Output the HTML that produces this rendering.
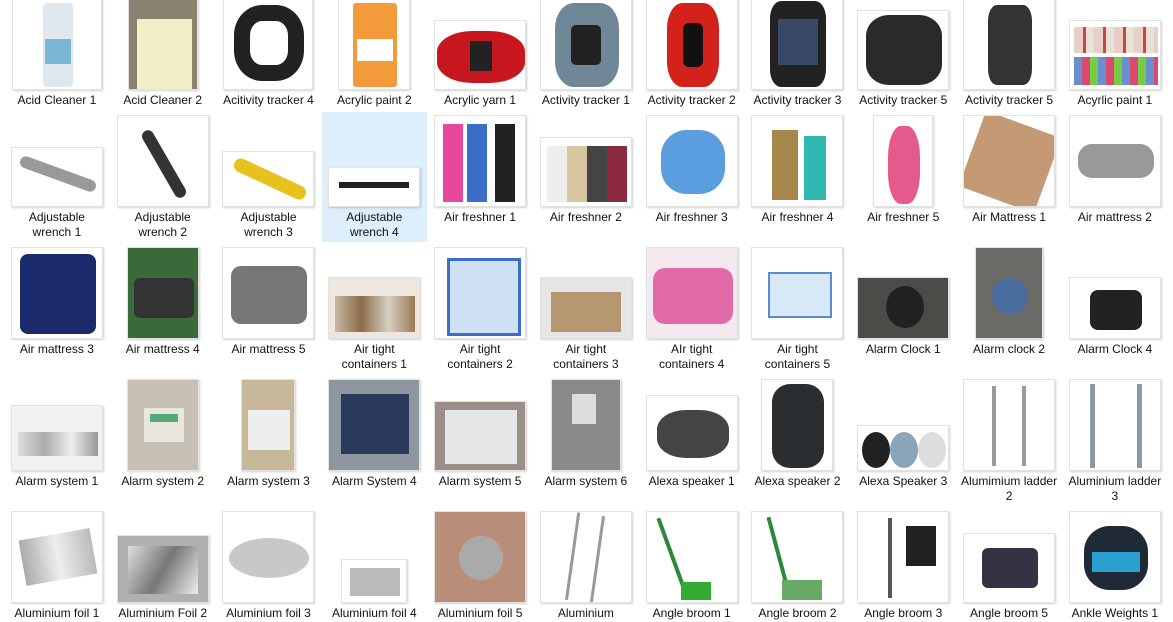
<!DOCTYPE html>
<html><head><meta charset="utf-8"><style>
body{margin:0;width:1173px;height:622px;background:#fff;overflow:hidden;position:relative;font-family:"Segoe UI","Liberation Sans",sans-serif;}
.r{position:absolute;left:4px;display:grid;grid-template-columns:repeat(11,105.8px);}
.th{height:92px;display:flex;align-items:flex-end;justify-content:center;}
.t{box-sizing:border-box;border:1px solid #e2e2e2;box-shadow:1px 1px 2px rgba(0,0,0,.18);background:#fff;position:relative;overflow:hidden;}
.t i{position:absolute;display:block;}
.l{font-size:12px;line-height:15px;color:#111;text-align:center;margin-top:3px;padding:0 4px;}
.sel{position:absolute;left:322px;top:112px;width:105px;height:130px;background:#dfeefb;}
</style></head><body>
<div class="sel"></div>
<div class="r" style="top:-2px">
<div><div class="th"><div class="t" style="width:90px;height:92px"><i style="left:30px;top:4px;width:30px;height:84px;background:#dfe8ee;border-radius:4px"></i><i style="left:32px;top:40px;width:26px;height:25px;background:#7ab6d6"></i></div></div><div class="l">Acid Cleaner 1</div></div>
<div><div class="th"><div class="t" style="width:70px;height:92px;background:#8a8270"><i style="left:8px;top:20px;width:55px;height:70px;background:#f2efc8"></i></div></div><div class="l">Acid Cleaner 2</div></div>
<div><div class="th"><div class="t" style="width:90px;height:92px"><i style="left:10px;top:6px;width:70px;height:76px;border:16px solid #222;border-radius:40%;box-sizing:border-box"></i></div></div><div class="l">Acitivity tracker 4</div></div>
<div><div class="th"><div class="t" style="width:72px;height:92px"><i style="left:14px;top:4px;width:44px;height:84px;background:#f39a3a;border-radius:3px"></i><i style="left:18px;top:40px;width:36px;height:22px;background:#fff"></i></div></div><div class="l">Acrylic paint 2</div></div>
<div><div class="th"><div class="t" style="width:92px;height:70px"><i style="left:2px;top:10px;width:88px;height:52px;background:#c8181f;border-radius:40%"></i><i style="left:35px;top:20px;width:22px;height:30px;background:#222"></i></div></div><div class="l">Acrylic yarn 1</div></div>
<div><div class="th"><div class="t" style="width:92px;height:92px"><i style="left:14px;top:4px;width:64px;height:84px;background:#6f8796;border-radius:30%"></i><i style="left:30px;top:26px;width:30px;height:40px;background:#222;border-radius:5px"></i></div></div><div class="l">Activity tracker 1</div></div>
<div><div class="th"><div class="t" style="width:92px;height:92px"><i style="left:20px;top:4px;width:52px;height:84px;background:#d3211c;border-radius:30%"></i><i style="left:36px;top:24px;width:20px;height:44px;background:#111;border-radius:6px"></i></div></div><div class="l">Activity tracker 2</div></div>
<div><div class="th"><div class="t" style="width:92px;height:92px"><i style="left:18px;top:2px;width:56px;height:86px;background:#222;border-radius:20%"></i><i style="left:26px;top:20px;width:40px;height:46px;background:#3a4a66"></i></div></div><div class="l">Activity tracker 3</div></div>
<div><div class="th"><div class="t" style="width:92px;height:80px"><i style="left:8px;top:4px;width:76px;height:70px;background:#2a2a2a;border-radius:30%"></i></div></div><div class="l">Activity tracker 5</div></div>
<div><div class="th"><div class="t" style="width:92px;height:92px"><i style="left:24px;top:6px;width:44px;height:80px;background:#333;border-radius:20%"></i></div></div><div class="l">Activity tracker 5</div></div>
<div><div class="th"><div class="t" style="width:92px;height:70px"><i style="left:4px;top:6px;width:84px;height:26px;background:repeating-linear-gradient(90deg,#e8d0c8 0 9px,#c44 9px 12px,#e9e1d8 12px 20px)"></i><i style="left:4px;top:36px;width:84px;height:28px;background:repeating-linear-gradient(90deg,#6a8fd0 0 8px,#d84a6e 8px 16px,#7c4 16px 24px)"></i></div></div><div class="l">Acyrlic paint 1</div></div>
</div>
<div class="r" style="top:115px">
<div><div class="th"><div class="t" style="width:92px;height:60px"><i style="left:6px;top:20px;width:80px;height:12px;background:#999;border-radius:6px;transform:rotate(20deg)"></i></div></div><div class="l">Adjustable wrench 1</div></div>
<div><div class="th"><div class="t" style="width:92px;height:92px"><i style="left:40px;top:10px;width:12px;height:76px;background:#333;border-radius:6px;transform:rotate(-30deg)"></i></div></div><div class="l">Adjustable wrench 2</div></div>
<div><div class="th"><div class="t" style="width:92px;height:56px"><i style="left:8px;top:20px;width:78px;height:14px;background:#e8c21c;border-radius:7px;transform:rotate(25deg)"></i></div></div><div class="l">Adjustable wrench 3</div></div>
<div><div class="th"><div class="t" style="width:92px;height:40px"><i style="left:10px;top:14px;width:70px;height:6px;background:#222"></i></div></div><div class="l">Adjustable wrench 4</div></div>
<div><div class="th"><div class="t" style="width:92px;height:92px"><i style="left:8px;top:8px;width:20px;height:78px;background:#e8489a"></i><i style="left:32px;top:8px;width:20px;height:78px;background:#3a6ec8"></i><i style="left:60px;top:8px;width:20px;height:78px;background:#222"></i></div></div><div class="l">Air freshner 1</div></div>
<div><div class="th"><div class="t" style="width:92px;height:70px"><i style="left:6px;top:8px;width:80px;height:56px;background:linear-gradient(90deg,#eee 0 25%,#d8c6a0 25% 50%,#444 50% 75%,#8c2b40 75%)"></i></div></div><div class="l">Air freshner 2</div></div>
<div><div class="th"><div class="t" style="width:92px;height:92px"><i style="left:14px;top:14px;width:64px;height:64px;background:#5a9ee0;border-radius:40%"></i></div></div><div class="l">Air freshner 3</div></div>
<div><div class="th"><div class="t" style="width:92px;height:92px"><i style="left:20px;top:14px;width:26px;height:70px;background:#a8874a"></i><i style="left:52px;top:20px;width:22px;height:64px;background:#2fb9b0"></i></div></div><div class="l">Air freshner 4</div></div>
<div><div class="th"><div class="t" style="width:60px;height:92px"><i style="left:14px;top:10px;width:32px;height:78px;background:#e45a8c;border-radius:40%"></i></div></div><div class="l">Air freshner 5</div></div>
<div><div class="th"><div class="t" style="width:92px;height:92px"><i style="left:6px;top:6px;width:80px;height:80px;background:#c49a74;transform:rotate(20deg)"></i></div></div><div class="l">Air Mattress 1</div></div>
<div><div class="th"><div class="t" style="width:92px;height:92px"><i style="left:8px;top:28px;width:76px;height:34px;background:#999;border-radius:14px"></i></div></div><div class="l">Air mattress 2</div></div>
</div>
<div class="r" style="top:247px">
<div><div class="th"><div class="t" style="width:92px;height:92px"><i style="left:8px;top:6px;width:76px;height:80px;background:#1a2a6a;border-radius:8px"></i></div></div><div class="l">Air mattress 3</div></div>
<div><div class="th"><div class="t" style="width:72px;height:92px;background:#3a6a3a"><i style="left:6px;top:30px;width:60px;height:40px;background:#333;border-radius:6px"></i></div></div><div class="l">Air mattress 4</div></div>
<div><div class="th"><div class="t" style="width:92px;height:92px"><i style="left:8px;top:18px;width:76px;height:58px;background:#777;border-radius:10px"></i></div></div><div class="l">Air mattress 5</div></div>
<div><div class="th"><div class="t" style="width:92px;height:62px;background:#ede7df"><i style="left:6px;top:18px;width:80px;height:36px;background:linear-gradient(90deg,#c7b8a0,#8b6c4a,#d6d0c2,#9c7a54)"></i></div></div><div class="l">Air tight containers 1</div></div>
<div><div class="th"><div class="t" style="width:92px;height:92px"><i style="left:12px;top:10px;width:68px;height:72px;background:#cfe0f2;border:3px solid #3a6ec8"></i></div></div><div class="l">Air tight containers 2</div></div>
<div><div class="th"><div class="t" style="width:92px;height:62px;background:#e6e6e6"><i style="left:10px;top:14px;width:70px;height:40px;background:#b59870"></i></div></div><div class="l">Air tight containers 3</div></div>
<div><div class="th"><div class="t" style="width:92px;height:92px;background:#f3e9ef"><i style="left:6px;top:20px;width:80px;height:56px;background:#e26aa8;border-radius:12px"></i></div></div><div class="l">AIr tight containers 4</div></div>
<div><div class="th"><div class="t" style="width:92px;height:92px"><i style="left:16px;top:24px;width:60px;height:42px;background:#d7e8f6;border:2px solid #5a8ad0"></i></div></div><div class="l">Air tight containers 5</div></div>
<div><div class="th"><div class="t" style="width:92px;height:62px;background:#4a4c48"><i style="left:28px;top:8px;width:38px;height:42px;background:#222;border-radius:50%"></i></div></div><div class="l">Alarm Clock 1</div></div>
<div><div class="th"><div class="t" style="width:68px;height:92px;background:#6a6a66"><i style="left:16px;top:30px;width:36px;height:36px;background:#4a6da0;border-radius:50%"></i></div></div><div class="l">Alarm clock 2</div></div>
<div><div class="th"><div class="t" style="width:92px;height:62px"><i style="left:20px;top:12px;width:52px;height:40px;background:#222;border-radius:8px"></i></div></div><div class="l">Alarm Clock 4</div></div>
</div>
<div class="r" style="top:379px">
<div><div class="th"><div class="t" style="width:92px;height:66px;background:#f2f2f2"><i style="left:6px;top:26px;width:80px;height:24px;background:linear-gradient(90deg,#ddd,#aaa,#eee,#999)"></i></div></div><div class="l">Alarm system 1</div></div>
<div><div class="th"><div class="t" style="width:72px;height:92px;background:#c7c0b4"><i style="left:16px;top:28px;width:40px;height:34px;background:#e8e6dd"></i><i style="left:22px;top:34px;width:28px;height:8px;background:#5a7"></i></div></div><div class="l">Alarm system 2</div></div>
<div><div class="th"><div class="t" style="width:54px;height:92px;background:#c8b89a"><i style="left:6px;top:30px;width:42px;height:40px;background:#eee"></i></div></div><div class="l">Alarm system 3</div></div>
<div><div class="th"><div class="t" style="width:92px;height:92px;background:#8e96a0"><i style="left:12px;top:14px;width:68px;height:60px;background:#2a3a5a"></i></div></div><div class="l">Alarm System 4</div></div>
<div><div class="th"><div class="t" style="width:92px;height:70px;background:#9a8e88"><i style="left:10px;top:8px;width:72px;height:54px;background:#e6e6e6"></i></div></div><div class="l">Alarm system 5</div></div>
<div><div class="th"><div class="t" style="width:70px;height:92px;background:#8a8a8c"><i style="left:20px;top:14px;width:24px;height:30px;background:#ddd"></i></div></div><div class="l">Alarm system 6</div></div>
<div><div class="th"><div class="t" style="width:92px;height:76px"><i style="left:10px;top:14px;width:72px;height:48px;background:#444;border-radius:40%"></i></div></div><div class="l">Alexa speaker 1</div></div>
<div><div class="th"><div class="t" style="width:72px;height:92px"><i style="left:10px;top:4px;width:52px;height:84px;background:#2a2e30;border-radius:18px"></i></div></div><div class="l">Alexa speaker 2</div></div>
<div><div class="th"><div class="t" style="width:92px;height:46px"><i style="left:4px;top:6px;width:28px;height:36px;background:#222;border-radius:50%"></i><i style="left:32px;top:6px;width:28px;height:36px;background:#8aa4b8;border-radius:50%"></i><i style="left:60px;top:6px;width:28px;height:36px;background:#ddd;border-radius:50%"></i></div></div><div class="l">Alexa Speaker 3</div></div>
<div><div class="th"><div class="t" style="width:92px;height:92px"><i style="left:28px;top:6px;width:34px;height:80px;border-left:4px solid #999;border-right:4px solid #999;box-sizing:border-box"></i></div></div><div class="l">Alumimium ladder 2</div></div>
<div><div class="th"><div class="t" style="width:92px;height:92px"><i style="left:20px;top:4px;width:52px;height:84px;border-left:5px solid #8a9aa8;border-right:5px solid #8a9aa8;box-sizing:border-box"></i></div></div><div class="l">Aluminium ladder 3</div></div>
</div>
<div class="r" style="top:511px">
<div><div class="th"><div class="t" style="width:92px;height:92px"><i style="left:10px;top:22px;width:72px;height:46px;background:linear-gradient(90deg,#aaa,#eee,#bbb);transform:rotate(-10deg)"></i></div></div><div class="l">Aluminium foil 1</div></div>
<div><div class="th"><div class="t" style="width:92px;height:68px;background:#b0b0b0"><i style="left:10px;top:10px;width:70px;height:48px;background:linear-gradient(120deg,#ddd,#777,#eee)"></i></div></div><div class="l">Aluminium Foil 2</div></div>
<div><div class="th"><div class="t" style="width:92px;height:92px"><i style="left:6px;top:26px;width:80px;height:40px;background:#c8c8c8;border-radius:50%"></i></div></div><div class="l">Aluminium foil 3</div></div>
<div><div class="th"><div class="t" style="width:66px;height:44px"><i style="left:8px;top:8px;width:50px;height:28px;background:#bbb"></i></div></div><div class="l">Aluminium foil 4</div></div>
<div><div class="th"><div class="t" style="width:92px;height:92px;background:#b98e78"><i style="left:24px;top:24px;width:44px;height:44px;background:#aaa;border-radius:50%"></i></div></div><div class="l">Aluminium foil 5</div></div>
<div><div class="th"><div class="t" style="width:92px;height:92px"><i style="left:30px;top:2px;width:28px;height:88px;border-left:3px solid #999;border-right:3px solid #999;box-sizing:border-box;transform:rotate(8deg)"></i></div></div><div class="l">Aluminium</div></div>
<div><div class="th"><div class="t" style="width:92px;height:92px"><i style="left:22px;top:4px;width:4px;height:74px;background:#2a8a3a;transform:rotate(-20deg)"></i><i style="left:34px;top:70px;width:30px;height:18px;background:#3a3"></i></div></div><div class="l">Angle broom 1</div></div>
<div><div class="th"><div class="t" style="width:92px;height:92px"><i style="left:24px;top:4px;width:4px;height:74px;background:#2a8a3a;transform:rotate(-15deg)"></i><i style="left:30px;top:68px;width:40px;height:20px;background:#6a6"></i></div></div><div class="l">Angle broom 2</div></div>
<div><div class="th"><div class="t" style="width:92px;height:92px"><i style="left:30px;top:6px;width:4px;height:80px;background:#555"></i><i style="left:48px;top:14px;width:30px;height:40px;background:#222"></i></div></div><div class="l">Angle broom 3</div></div>
<div><div class="th"><div class="t" style="width:92px;height:70px"><i style="left:18px;top:14px;width:56px;height:40px;background:#334;border-radius:6px"></i></div></div><div class="l">Angle broom 5</div></div>
<div><div class="th"><div class="t" style="width:92px;height:92px"><i style="left:14px;top:14px;width:64px;height:64px;background:#1f2a36;border-radius:40%"></i><i style="left:22px;top:40px;width:48px;height:20px;background:#2aa0d0"></i></div></div><div class="l">Ankle Weights 1</div></div>
</div>
</body></html>
